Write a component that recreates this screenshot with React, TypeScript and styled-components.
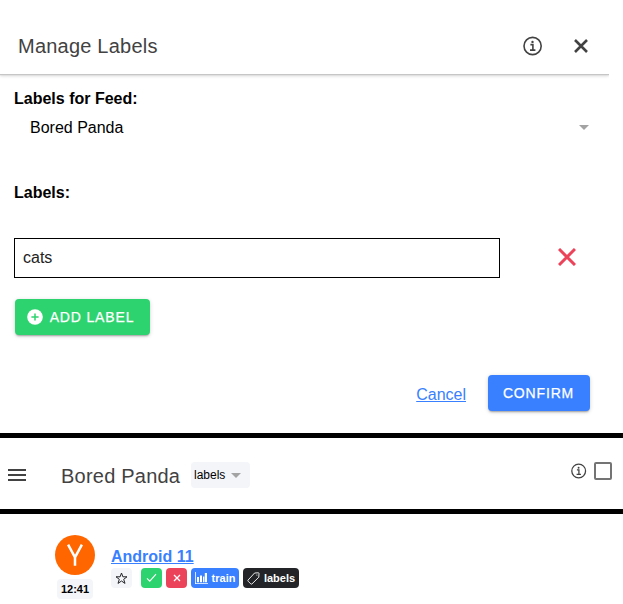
import React from "react";
import styled, { createGlobalStyle } from "styled-components";

const GlobalStyle = createGlobalStyle`
  * { box-sizing: border-box; }
  body {
    margin: 0;
    background: #fff;
    color: #000;
    font-family: "Liberation Sans", Arial, sans-serif;
    font-size: 16px;
    line-height: 18px;
  }
  svg { display: block; flex: none; }
`;

const Page = styled.div`
  width: 623px;
  height: 604px;
  overflow: hidden;
  display: flex;
  flex-direction: column;
`;

const Dialog = styled.section`
  height: 433px;
  width: 609px;
  display: flex;
  flex-direction: column;
`;

const DialogHeader = styled.header`
  height: 74px;
  flex: none;
  display: flex;
  align-items: center;
  padding: 18px 21px 0 18px;
  box-shadow: 0 1px 1px #c6c6c6, 0 2px 3px rgba(0, 0, 0, 0.16);
  clip-path: inset(0 0 -6px 0);
`;

const Title = styled.h1`
  margin: 0;
  font-size: 20px;
  line-height: 24px;
  font-weight: 400;
  letter-spacing: 0.22px;
  color: #424242;
`;

const HeaderActions = styled.div`
  display: flex;
  align-items: center;
  gap: 31px;
  margin-left: auto;
`;

const DialogBody = styled.div`
  flex: 1;
  display: flex;
  flex-direction: column;
  padding: 16px 19px 22px 14px;
`;

const FieldHeading = styled.div`
  font-weight: 700;
  height: 18px;
`;

const Caret = styled.span`
  border: 5px solid transparent;
  border-top-color: #a3a3a3;
  border-bottom: 0;
`;

const Select = styled.div`
  display: flex;
  align-items: center;
  justify-content: space-between;
  height: 18px;
  margin: 11px 1px 47px 0;
  padding-left: 16px;

  ${Caret} { margin-bottom: 1px; }
`;

const LabelRow = styled.div`
  display: flex;
  align-items: center;
  gap: 58px;
  margin-top: 36px;

  & > svg { margin-bottom: 2px; }
`;

const LabelInput = styled.div`
  width: 486px;
  height: 40px;
  border: 1px solid #000;
  padding: 10px 8px;
  color: #222;
`;

const Button = styled.button<{ $bg: string; $width: number; $end?: number }>`
  display: flex;
  align-items: center;
  justify-content: center;
  gap: 7px;
  width: ${(p) => p.$width}px;
  height: 36px;
  padding: 0 ${(p) => p.$end ?? 0}px 0 0;
  border: 0;
  border-radius: 4px;
  background: ${(p) => p.$bg};
  color: #fff;
  font: 500 14px/16px "Liberation Sans", Arial, sans-serif;
  letter-spacing: 0.84px;
  -webkit-text-stroke: 0.25px #fff;
  box-shadow: 0 2px 2px -1px rgba(0, 0, 0, 0.3), 0 1px 4px rgba(0, 0, 0, 0.16);
`;

const AddRow = styled.div`
  display: flex;
  padding: 21px 0 0 1px;
`;

const Footer = styled.footer`
  display: flex;
  align-items: center;
  justify-content: flex-end;
  gap: 22px;
  margin-top: auto;
`;

const CancelLink = styled.a`
  color: #3880ff;
  text-decoration: underline;
  padding-top: 3px;
`;

const Divider = styled.div`
  height: 5px;
  flex: none;
  background: #000;
`;

const Toolbar = styled.nav`
  height: 71px;
  flex: none;
  display: flex;
  align-items: center;
  padding: 3px 11px 0 8px;
`;

const FeedTitle = styled(Title)`
  width: 120px;
  margin: 2px 10px 0 35px;
  white-space: nowrap;
`;

const FilterButton = styled.div`
  display: flex;
  align-items: center;
  gap: 6px;
  width: 59px;
  height: 26px;
  padding-left: 3px;
  border-radius: 4px;
  background: #f4f5f8;
  font-size: 12px;
  line-height: 14px;
`;

const ToolbarActions = styled.div`
  display: flex;
  align-items: center;
  gap: 7px;
  margin: 0 0 8px auto;
`;

const Checkbox = styled.span`
  width: 18px;
  height: 18px;
  border: 2px solid #747474;
  border-radius: 2px;
`;

const Entry = styled.article`
  display: flex;
  gap: 16px;
  padding: 21px 0 0 55px;
`;

const Source = styled.div`
  display: flex;
  flex-direction: column;
  align-items: center;
  gap: 4px;
`;

const Avatar = styled.div`
  width: 40px;
  height: 40px;
  border-radius: 50%;
  display: flex;
  align-items: center;
  justify-content: center;
  background: #ff6600;
`;

const Chip = styled.span<{ $bg: string; $fg: string; $width: number }>`
  display: flex;
  align-items: center;
  justify-content: center;
  gap: 4px;
  width: ${(p) => p.$width}px;
  height: 20px;
  border-radius: 4px;
  background: ${(p) => p.$bg};
  color: ${(p) => p.$fg};
  font-size: 11px;
  line-height: 12px;
  font-weight: 700;
`;

const EntryBody = styled.div`
  padding-top: 13px;
`;

const EntryTitle = styled.a`
  display: block;
  height: 18px;
  color: #3880ff;
  font-weight: 700;
  text-decoration: underline;
`;

const Chips = styled.div`
  display: flex;
  gap: 4px;
  margin-top: 2px;

  & > :first-child { margin-right: 5px; }
`;

const InfoIcon = ({ size }: { size: number }) => (
  <svg width={size} height={size} viewBox="0 0 20 20" fill="none" stroke="#424242" strokeWidth="1.6">
    <circle cx="9.6" cy="10" r="8.6" />
    <path d="M7.4 8.6h2.5v5.2M7 14.1h5.4" />
    <circle cx="9.5" cy="5.9" r="1.2" fill="#424242" stroke="none" />
  </svg>
);

const CrossIcon = ({ size, color, weight }: { size: number; color: string; weight: number }) => (
  <svg width={size} height={size} viewBox={`0 0 ${size} ${size}`} stroke={color} strokeWidth={weight}>
    <path d={`M1 1L${size - 1} ${size - 1}M${size - 1} 1L1 ${size - 1}`} />
  </svg>
);

const AddIcon = () => (
  <svg width="16" height="16" viewBox="0 0 16 16">
    <circle cx="8" cy="8" r="7.8" fill="#fff" />
    <path d="M8 4.4v7.2M4.4 8h7.2" stroke="#2dd36f" strokeWidth="1.5" />
  </svg>
);

const MenuIcon = () => (
  <svg width="18" height="12" viewBox="0 0 18 12" fill="#424242">
    <path d="M0 0h18v2H0zM0 5h18v2H0zM0 10h18v2H0z" />
  </svg>
);

const YMark = () => (
  <svg width="18" height="24" viewBox="0 0 18 24" fill="none" stroke="#fff" strokeWidth="2.5">
    <path d="M2.1 1.6L9 14.4L15.9 1.6M9 13.6v9.2" />
  </svg>
);

const StarIcon = () => (
  <svg width="13" height="13" viewBox="0 0 13 13" fill="none" stroke="#222428" strokeWidth="1">
    <path d="M6.5 1L7.9 4.8H12L8.7 7.3L10 11.4L6.5 9L3 11.4L4.3 7.3L1 4.8h4.1z" />
  </svg>
);

const CheckIcon = () => (
  <svg width="11" height="10" viewBox="0 0 11 10" fill="none" stroke="#fff" strokeWidth="1.1">
    <path d="M1 5.4L3.8 8.2L10 1.2" />
  </svg>
);

const ChartIcon = () => (
  <svg width="13" height="12" viewBox="0 0 13 12" fill="#fff">
    <path d="M0 0h.8v11.2H13v.8H0zM2 5h2v5.3H2zM5 3.5h2v6.8H5zM8 4.5h1.3v5.8H8zM9.8 1h2.2v9.3H9.8z" />
  </svg>
);

const TagIcon = () => (
  <svg width="13" height="13" viewBox="0 0 13 13" fill="none" stroke="#fff" strokeWidth="0.9">
    <path d="M7.6 1L11.4 .8Q12 .8 12 1.4L11.8 5.2L5 11.9Q4.4 12.4 3.8 11.9L1.1 9.2Q.6 8.6 1.1 8z" />
    <circle cx="9.9" cy="3" r=".6" fill="#fff" stroke="none" />
  </svg>
);

export default function App() {
  return (
    <Page>
      <GlobalStyle />
      <Dialog>
        <DialogHeader>
          <Title>Manage Labels</Title>
          <HeaderActions>
            <InfoIcon size={20} />
            <CrossIcon size={14} color="#424242" weight={2.6} />
          </HeaderActions>
        </DialogHeader>
        <DialogBody>
          <FieldHeading>Labels for Feed:</FieldHeading>
          <Select>
            <span>Bored Panda</span>
            <Caret />
          </Select>
          <FieldHeading>Labels:</FieldHeading>
          <LabelRow>
            <LabelInput>cats</LabelInput>
            <CrossIcon size={18} color="#eb445a" weight={3} />
          </LabelRow>
          <AddRow>
            <Button $bg="#2dd36f" $width={135} $end={4}>
              <AddIcon />
              ADD LABEL
            </Button>
          </AddRow>
          <Footer>
            <CancelLink>Cancel</CancelLink>
            <Button $bg="#3880ff" $width={102} $end={1}>CONFIRM</Button>
          </Footer>
        </DialogBody>
      </Dialog>
      <Divider />
      <Toolbar>
        <MenuIcon />
        <FeedTitle>Bored Panda</FeedTitle>
        <FilterButton>
          labels
          <Caret />
        </FilterButton>
        <ToolbarActions>
          <InfoIcon size={16} />
          <Checkbox />
        </ToolbarActions>
      </Toolbar>
      <Divider />
      <Entry>
        <Source>
          <Avatar>
            <YMark />
          </Avatar>
          <Chip $bg="#f4f5f8" $fg="#000" $width={36}>12:41</Chip>
        </Source>
        <EntryBody>
          <EntryTitle>Android 11</EntryTitle>
          <Chips>
            <Chip $bg="#f4f5f8" $fg="#000" $width={21}><StarIcon /></Chip>
            <Chip $bg="#2dd36f" $fg="#fff" $width={21}><CheckIcon /></Chip>
            <Chip $bg="#eb445a" $fg="#fff" $width={21}><CrossIcon size={8} color="#fff" weight={1.3} /></Chip>
            <Chip $bg="#3880ff" $fg="#fff" $width={48}><ChartIcon />train</Chip>
            <Chip $bg="#222428" $fg="#fff" $width={56}><TagIcon />labels</Chip>
          </Chips>
        </EntryBody>
      </Entry>
    </Page>
  );
}
